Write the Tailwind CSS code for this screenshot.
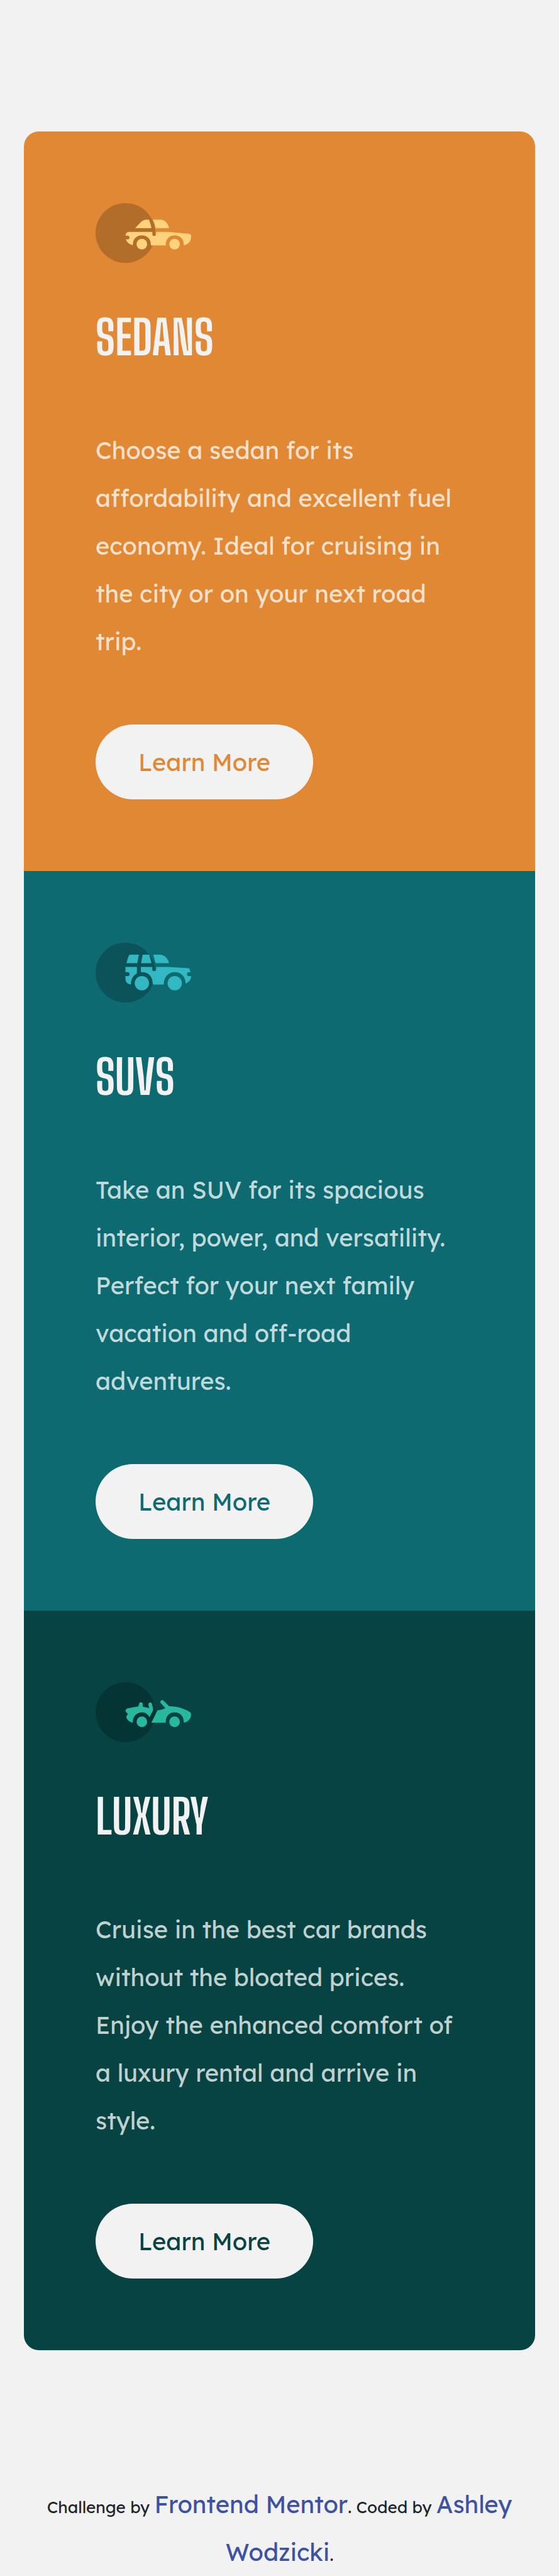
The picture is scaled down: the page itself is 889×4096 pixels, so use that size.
<!DOCTYPE html>
<html lang="en">
<head>
<meta charset="utf-8">
<meta name="viewport" content="width=device-width, initial-scale=1">
<title>3-column preview card</title>
<script src="https://cdn.jsdelivr.net/npm/@tailwindcss/browser@4"></script>
</head>
<body class="bg-[#f2f2f2] font-['Lexend_Deca',Inter,sans-serif] text-[38px] leading-[76px] text-[#212529]">
<main class="mx-[38px] mt-[209px] overflow-hidden rounded-[24px]">
  <section class="flex flex-col items-start bg-[#e08833] p-[114px]">
    <svg class="h-[95px] w-[152px]" viewBox="66 54 576 360" aria-hidden="true">
      <circle cx="246" cy="234" r="180" fill="#b36d2a"/>
      <g fill="#ffd37b">
        <path d="M304 205L340 168Q354 153 372 153H388Q398 180 403 205Z"/>
        <path d="M412 153H455C485 153 503 175 509 205H428Q422 175 412 153Z"/>
        <path d="M268 227H408V240a11.500 12 0 0 0 23 0V227H508L628 239Q642 241 642 255C642 285 622 305 597 308C600 270 575 248 542 248C510 248 487 272 489 309H399C402 272 378 248 345 248C312 248 289 272 291 307C270 304 254 290 249 272H259a11 11 0 0 0 0-22H246Q248 227 268 227Z"/>
        <circle cx="345" cy="301" r="32"/><circle cx="542" cy="301" r="32"/>
      </g>
    </svg>
    <h2 class="mt-[68px] font-['Big_Shoulders_Display','Liberation_Sans_Narrow','Liberation_Sans',sans-serif] text-[76px] leading-[100px] font-bold text-[#f2f2f2]">SEDANS</h2>
    <p class="mt-[92px] text-white/75">Choose a sedan for its affordability and excellent fuel economy. Ideal for cruising in the city or on your next road trip.</p>
    <button type="button" class="mt-[94px] h-[119px] w-[346px] rounded-full bg-[#f2f2f2] text-[#e08833]">Learn More</button>
  </section>
  <section class="flex flex-col items-start bg-[#0c6a70] p-[114px]">
    <svg class="h-[95px] w-[152px]" viewBox="66 48 576 360" aria-hidden="true">
      <circle cx="246" cy="228" r="180" fill="#0b5358"/>
      <g fill="#33b7c2">
        <path d="M275 120H327L317 171H252L264 130Q267 120 275 120Z"/>
        <path d="M350 120H389L403 171H340Z"/>
        <path d="M413 120H455C485 122 502 145 509 171H428Z"/>
        <path d="M246 194H315V233C292 246 279 268 279 299C260 299 246 285 246 266V249H259a12 12 0 0 0 0-24H246Z"/>
        <path d="M339 194H408V207a11.500 12 0 0 0 23 0V194H508L625 201Q631 202 633 208L638 225H629a12 12 0 0 0 0 24H642C642 270 628 288 609 294C608 250 580 225 543 225C504 225 477 255 477 300H411C411 250 385 225 345 225H339Z"/>
        <circle cx="345" cy="292" r="43"/><circle cx="543" cy="292" r="43"/>
      </g>
    </svg>
    <h2 class="mt-[68px] font-['Big_Shoulders_Display','Liberation_Sans_Narrow','Liberation_Sans',sans-serif] text-[76px] leading-[100px] font-bold text-[#f2f2f2]">SUVS</h2>
    <p class="mt-[92px] text-white/75">Take an SUV for its spacious interior, power, and versatility. Perfect for your next family vacation and off-road adventures.</p>
    <button type="button" class="mt-[94px] h-[119px] w-[346px] rounded-full bg-[#f2f2f2] text-[#0c6a70]">Learn More</button>
  </section>
  <section class="flex flex-col items-start bg-[#064342] p-[114px]">
    <svg class="h-[95px] w-[152px]" viewBox="66 57 576 360" aria-hidden="true">
      <circle cx="246" cy="237" r="180" fill="#043433"/>
      <g fill="#2ab7a0">
        <path d="M262 213L324 202L328 188a11 11 0 0 1 22 0V204Q370 207 389 213L384 190a11 11 0 0 1 21-5L412 212Q415 222 409 232L391 267C380 248 365 238 345 238C312 238 290 262 290 300C268 296 252 280 251 263L261 248L247 232Q243 218 262 213Z"/>
        <path d="M440 225Q465 225 487 212L460 184a11 11 0 0 1 16-16L509 201C560 202 600 215 633 235Q642 240 642 247C642 275 625 296 597 300C600 262 575 238 542 238C510 238 487 262 489 300H402Z"/>
        <circle cx="345" cy="295" r="32"/><circle cx="542" cy="295" r="32"/>
      </g>
    </svg>
    <h2 class="mt-[68px] font-['Big_Shoulders_Display','Liberation_Sans_Narrow','Liberation_Sans',sans-serif] text-[76px] leading-[100px] font-bold text-[#f2f2f2]">LUXURY</h2>
    <p class="mt-[92px] text-white/75">Cruise in the best car brands without the bloated prices. Enjoy the enhanced comfort of a luxury rental and arrive in style.</p>
    <button type="button" class="mt-[94px] h-[119px] w-[346px] rounded-full bg-[#f2f2f2] text-[#064342]">Learn More</button>
  </section>
</main>
<footer class="mx-[38px] mt-[207px] text-center"><span class="text-[26px] leading-none">Challenge by </span><a href="https://www.frontendmentor.io" class="text-[#3e52a3]">Frontend Mentor</a><span class="text-[26px] leading-none">. Coded by </span><a href="#" class="text-[#3e52a3]">Ashley Wodzicki</a><span class="text-[26px] leading-none">.</span></footer>
</body>
</html>
